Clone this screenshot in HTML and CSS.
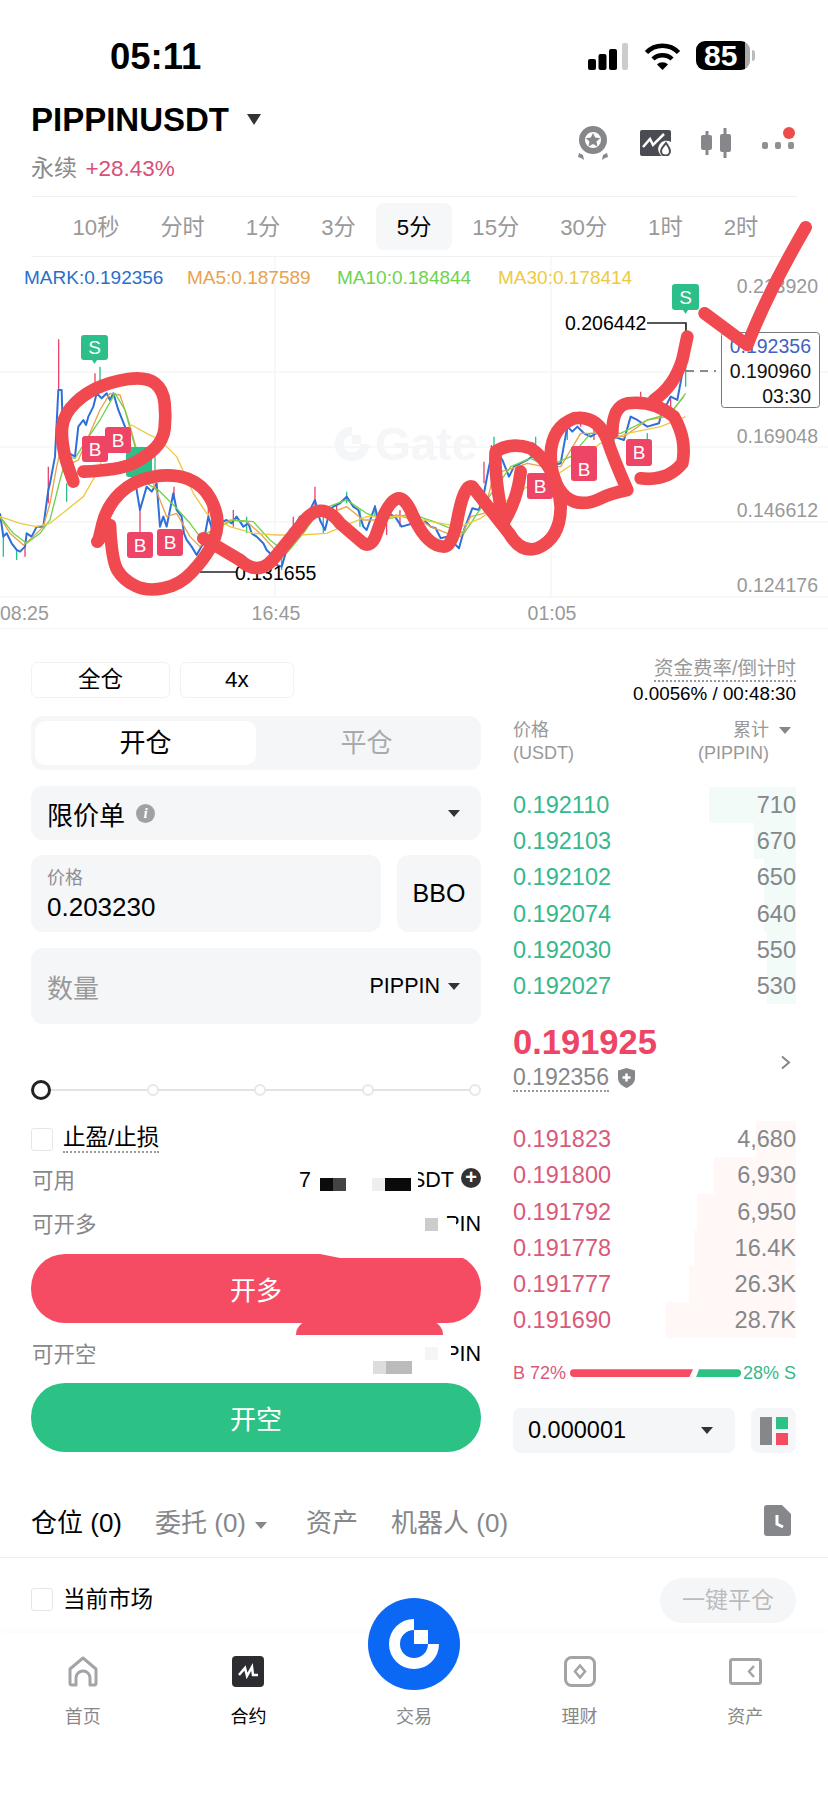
FILE: index.html
```html
<!DOCTYPE html>
<html lang="zh-CN">
<head>
    <meta charset="UTF-8">
    <meta name="viewport" content="width=device-width, initial-scale=1.0">
    <title>PIPPINUSDT</title>
    <link rel="stylesheet" href="styles.css">
</head>
<body>

<div class="status">
    <span class="clock">05:11</span>
    <div class="status-icons">
        <svg width="40" height="28" viewBox="0 0 40 28">
            <rect x="0" y="17" width="8" height="11" rx="2" fill="#000"/>
            <rect x="10.5" y="12" width="8" height="16" rx="2" fill="#000"/>
            <rect x="21" y="7" width="8" height="21" rx="2" fill="#000"/>
            <rect x="34" y="1" width="6" height="27" rx="2" fill="#ccc"/>
        </svg>
        <svg width="37" height="28" viewBox="0 0 37 28">
            <path d="M2.5 10.5C11 1.500 26 1.500 34.5 10.5" fill="none" stroke="#000" stroke-width="4.5"/>
            <path d="M9 17C14 12 23 12 28 17" fill="none" stroke="#000" stroke-width="4.5"/>
            <path d="M13 22.5C16 19.5 21 19.5 24 22.5L18.5 28Z" fill="#000"/>
        </svg>
        <div class="battery">85</div>
    </div>
</div>

<div class="head">
    <div>
        <div class="pair">PIPPINUSDT <i class="tri tri-big"></i></div>
        <div class="pair-sub">永续 <span class="pink">+28.43%</span></div>
    </div>
    <div class="head-icons">
        <svg width="34" height="34" viewBox="0 0 34 34">
            <circle cx="17" cy="14" r="11" fill="none" stroke="#85878b" stroke-width="6"/>
            <path d="M17 7l2.2 4.6 5 .6-3.700 3.400 1 5-4.500-2.500-4.500 2.500 1-5-3.700-3.400 5-.6z" fill="#85878b"/>
            <path d="M3 27l4 2 1 5-3-2-3-1zM31 27l-4 2-1 5 3-2 3-1z" fill="#85878b"/>
        </svg>
        <svg width="31" height="26" viewBox="0 0 31 26">
            <path d="M2 0H29a2 2 0 0 1 2 2V12a7 7 0 0 0-9 14H2a2 2 0 0 1-2-2V2a2 2 0 0 1 2-2Z" fill="#4a4c52"/>
            <path d="M3 17L10 9L13 15L24 4" fill="none" stroke="#fff" stroke-width="2.5"/>
            <path d="M26 13c2 3 4 5 4 8a4.500 4.500 0 0 1-9 0c0-3 3-5 5-8Z" fill="none" stroke="#4a4c52" stroke-width="2"/>
        </svg>
        <svg width="30" height="30" viewBox="0 0 30 30">
            <path d="M6 3V27M24 0V30" stroke="#85878b" stroke-width="3"/>
            <rect x="0" y="7" width="11" height="15" rx="2" fill="#85878b"/>
            <rect x="19" y="6" width="11" height="18" rx="2" fill="#85878b"/>
        </svg>
        <div class="dots"><i></i><i></i><i></i><b></b></div>
    </div>
</div>

<div class="tabs">
    <span class="tab">10秒</span>
    <span class="tab">分时</span>
    <span class="tab">1分</span>
    <span class="tab">3分</span>
    <span class="tab tab-on">5分</span>
    <span class="tab">15分</span>
    <span class="tab">30分</span>
    <span class="tab">1时</span>
    <span class="tab">2时</span>
</div>

<div class="chart">
    <svg class="chart-svg" width="828" height="371" viewBox="0 257 828 371">
        <!-- grid -->
        <path d="M0 372H828M0 447H828M0 522H828M0 597H828M275 257V597M551 257V597" stroke="#f6f6f7" stroke-width="1.5"/>

        <!-- watermark -->
        <path d="M352 431A13 13 0 1 0 365 444" fill="none" stroke="#f5f6f8" stroke-width="9"/>
        <rect x="352" y="435" width="9" height="9" fill="#f5f6f8"/>
        <text class="mark-text" x="375" y="460">Gate</text>

        <!-- legend -->
        <text class="legend" x="24" y="284" fill="#2a6fc9">MARK:0.192356</text>
        <text class="legend" x="187" y="284" fill="#e9a24c">MA5:0.187589</text>
        <text class="legend" x="337" y="284" fill="#6fd24c">MA10:0.184844</text>
        <text class="legend" x="498" y="284" fill="#edc944">MA30:0.178414</text>

        <!-- axis -->
        <text class="axis" x="818" y="293" text-anchor="end">0.213920</text>
        <text class="axis" x="818" y="443" text-anchor="end">0.169048</text>
        <text class="axis" x="818" y="517" text-anchor="end">0.146612</text>
        <text class="axis" x="818" y="592" text-anchor="end">0.124176</text>
        <text class="axis" x="0" y="620">08:25</text>
        <text class="axis" x="276" y="620" text-anchor="middle">16:45</text>
        <text class="axis" x="552" y="620" text-anchor="middle">01:05</text>

        <!-- left half, drawn at 3x -->
        <g transform="translate(0 250) scale(.3333)" fill="none" stroke-linejoin="round">
            <path d="M176 268V420M145 650V760M285 370V430M420 780V850M522 710V750M945 710V780M75 890V920M625 750V800M1160 820V855M700 780V830M880 800V850M1010 760V810M1200 780V830" stroke="#e8476a" stroke-width="4"/>
            <path d="M10 850V920M50 900V930M200 700V755M300 350V420M465 610V700M1040 725V760M1125 765V800M740 800V850M970 800V850M1080 780V830M845 920V960" stroke="#2dbf8a" stroke-width="4"/>
            <path d="M0 790L10 860L20 850L35 880L50 900L60 905L75 890L80 850L95 860L110 830L130 830L145 720L150 700L165 620L175 420L185 420L190 600L225 620L235 530L250 510L258 525L265 500L280 470L290 430L305 445L320 430L330 450L340 430L355 480L375 530L410 720L420 780L440 710L455 725L470 700L480 830L490 800L500 830L520 730L530 780L545 800L552 850L560 870L575 890L590 915L610 880L625 800L640 850L655 820L680 810L695 820L710 800L730 830L745 820L755 850L770 860L790 880L800 900L820 920L830 945L845 950L860 900L870 840L885 825L900 800L925 790L945 750L960 810L975 840L990 780L1000 770L1020 760L1040 740L1060 770L1075 780L1090 830L1100 840L1125 770L1135 810L1150 820L1165 790L1185 800L1205 830L1240 820" stroke="#2f6fd8" stroke-width="6"/>
            <path d="M0 800L30 850L70 885L100 860L130 830L150 760L170 650L190 560L215 640L235 630L265 560L300 480L330 430L360 435L385 510L410 600L430 650L460 700L500 800L530 790L570 860L600 890L640 840L690 810L740 815L780 850L830 905L870 880L910 810L950 770L990 790L1040 770L1090 810L1140 810L1190 795L1240 810" stroke="#e9a24c" stroke-width="4"/>
            <path d="M0 800L40 850L80 880L120 850L150 810L180 690L200 620L225 625L260 570L300 510L345 430L375 480L405 590L440 700L475 720L530 775L570 820L600 860L640 840L700 810L760 815L810 870L860 910L910 850L960 780L1040 750L1100 790L1150 810L1240 790" stroke="#6fd24c" stroke-width="4"/>
            <path d="M0 800L60 820L110 830L150 820L200 780L250 740L290 670L330 570L395 525L440 550L480 570L530 620L580 730L620 790L690 830L760 850L830 855L900 855L980 850L1040 825L1100 800L1190 800L1240 800" stroke="#edc944" stroke-width="4"/>
        </g>

        <!-- right half, drawn at 3x -->
        <g transform="translate(414 200) scale(.3333)" fill="none" stroke-linejoin="round">
            <path d="M210 785V850M232 735V800M500 635V680M680 575V610M540 680V720M770 590V640" stroke="#e8476a" stroke-width="4"/>
            <path d="M240 710V780M365 710V770M700 700V730M815 370V560M460 670V720M600 700V730" stroke="#2dbf8a" stroke-width="4"/>
            <path d="M30 960L50 980L65 985L80 1015L100 1010L135 1045L150 990L175 925L195 930L210 880L225 800L240 740L265 780L285 830L300 800L340 780L360 765L385 790L405 800L440 790L460 680L475 695L490 680L510 700L530 710L555 695L630 720L650 650L670 660L700 680L735 670L745 630L760 610L770 590L790 600L805 520L815 500" stroke="#2f6fd8" stroke-width="6"/>
            <path d="M0 950L50 980L100 1000L140 1010L170 950L210 940L240 820L280 810L340 790L390 800L440 800L500 700L560 700L630 710L700 660L760 650L810 590" stroke="#e9a24c" stroke-width="4"/>
            <path d="M0 945L60 965L110 985L150 1000L190 940L240 870L290 800L350 775L400 800L470 770L530 700L620 700L700 660L770 640L815 580" stroke="#6fd24c" stroke-width="4"/>
            <path d="M0 955L80 970L140 980L200 955L280 900L340 860L420 830L480 790L560 730L640 700L740 680L815 650" stroke="#edc944" stroke-width="4"/>
        </g>

        <!-- high / low -->
        <path d="M647 323H686V340" fill="none" stroke="#222" stroke-width="1.5"/>
        <text class="price-tag" x="565" y="330">0.206442</text>
        <path d="M200 572H236" stroke="#222" stroke-width="1.5"/>
        <text class="price-tag" x="235" y="580">0.131655</text>

        <!-- trade markers -->
        <g class="sell">
            <path d="M84 335H105a3 3 0 0 1 3 3V357a3 3 0 0 1-3 3H97L94.5 364L92 360H84a3 3 0 0 1-3-3V338a3 3 0 0 1 3-3Z"/>
            <text x="94.5" y="354">S</text>
            <path d="M675 284H696a3 3 0 0 1 3 3V307a3 3 0 0 1-3 3H688L685.5 314L683 310H675a3 3 0 0 1-3-3V287a3 3 0 0 1 3-3Z"/>
            <text x="685.5" y="304">S</text>
            <rect x="126" y="447" width="26" height="30" rx="3"/>
        </g>
        <g class="buy">
            <rect x="82" y="436" width="26" height="26" rx="3"/><text x="95" y="456">B</text>
            <rect x="105" y="427" width="26" height="26" rx="3"/><text x="118" y="447">B</text>
            <rect x="127" y="532" width="26" height="26" rx="3"/><text x="140" y="552">B</text>
            <rect x="157" y="529" width="26" height="27" rx="3"/><text x="170" y="549">B</text>
            <rect x="527" y="473" width="26" height="26" rx="3"/><text x="540" y="493">B</text>
            <rect x="571" y="446" width="26" height="26" rx="3"/>
            <rect x="571" y="455" width="26" height="26" rx="3"/><text x="584" y="476">B</text>
            <rect x="626" y="439" width="26" height="27" rx="3"/><text x="639" y="459">B</text>
        </g>

        <!-- countdown box -->
        <path d="M686 371H716" stroke="#666" stroke-width="1.5" stroke-dasharray="8 6"/>
        <rect x="721.5" y="332.5" width="98" height="75" rx="3" fill="#fff" stroke="#777"/>
        <text class="axis axis-blue" x="811" y="353" text-anchor="end">0.192356</text>
        <text class="axis axis-dark" x="811" y="378" text-anchor="end">0.190960</text>
        <text class="axis axis-dark" x="811" y="403" text-anchor="end">03:30</text>

        <!-- hand drawn marks on the left half -->
        <g transform="translate(0 250) scale(.3333)" class="scrawl">
            <path d="M220 695L205 652Q190 610 186 560Q182 510 211 475Q240 440 285 417Q330 395 385 387Q440 380 465 400Q490 420 494 460Q498 500 494 535Q490 570 465 595Q440 620 400 640Q360 660 250 665"/>
            <path d="M296 870L308 820Q320 770 360 730Q400 690 460 680Q520 670 565 687Q610 705 632 747Q655 790 652 825Q650 860 630 895Q610 930 575 967Q540 1005 490 1015Q440 1025 405 1007Q370 990 352 960Q335 930 330 825L292 875"/>
            <path d="M610 865L720 930Q780 985 830 915L900 830Q960 740 1020 820L1090 880Q1115 895 1130 850Q1190 670 1240 800"/>
        </g>
        <!-- and on the right half -->
        <g transform="translate(414 200) scale(.3333)" class="scrawl">
            <path d="M-2 950Q40 1040 90 1040Q115 1040 130 960Q150 850 175 860L285 1000Q320 1060 370 1045Q440 1015 440 920Q430 800 350 745Q290 725 245 755Q240 820 265 950"/>
            <path d="M320 815Q310 900 270 965"/>
            <path d="M640 870Q590 880 560 895Q500 925 455 890Q410 850 410 760Q415 680 480 655Q550 645 580 720Q600 780 640 870"/>
            <path d="M680 835Q760 845 805 790Q820 720 780 650Q720 600 640 610Q595 620 595 700"/>
            <path d="M720 600Q780 560 805 480L820 410"/>
            <path d="M872 340L1000 435Q1060 280 1175 82"/>
        </g>
    </svg>
</div>

<div class="trade">
    <div class="form">
        <div class="lev">
            <span class="lev-btn lev-mode">全仓</span>
            <span class="lev-btn lev-x">4x</span>
        </div>
        <div class="seg">
            <span class="seg-item seg-on">开仓</span>
            <span class="seg-item">平仓</span>
        </div>
        <div class="field order-type">
            <span>限价单</span>
            <i class="info">i</i>
            <i class="tri push"></i>
        </div>
        <div class="price-row">
            <div class="field price-box">
                <span class="price-label">价格</span>
                <span class="price-val">0.203230</span>
            </div>
            <div class="field bbo">BBO</div>
        </div>
        <div class="field qty">
            <span class="qty-label">数量</span>
            <span class="qty-unit push">PIPPIN</span>
            <i class="tri"></i>
        </div>

        <div class="slider">
            <i class="knob"></i><i class="stop"></i><i class="stop"></i><i class="stop"></i><i class="stop"></i>
        </div>

        <div class="tpsl">
            <i class="check"></i>
            <span class="dotted">止盈/止损</span>
        </div>

        <div class="info-row info-first">
            <span>可用</span>
            <span class="masked">
                <span class="num">7</span>
                <i class="px px-a"></i><i class="px px-b"></i>
                <i class="px px-c"></i>
                <span class="tail tail-sdt">SDT</span>
                <i class="px px-wipe-s"></i>
                <i class="px px-d"></i>
                <i class="plus">+</i>
            </span>
        </div>
        <div class="info-row info-second">
            <span>可开多</span>
            <span class="masked">
                <i class="px px-grey"></i>
                <span class="tail">PIN</span>
                <i class="px px-wipe-p"></i>
            </span>
        </div>
        <div class="buy-wrap">
            <button class="big-btn btn-long">开多</button>
            <i class="btn-notch"></i>
            <i class="btn-dome"></i>
        </div>
        <div class="info-row info-third">
            <span>可开空</span>
            <span class="masked">
                <i class="px px-pale"></i>
                <span class="tail">PIN</span>
                <i class="px px-wipe-p2"></i>
                <i class="px px-e"></i><i class="px px-f"></i>
            </span>
        </div>
        <button class="big-btn btn-short">开空</button>
    </div>

    <div class="book">
        <div class="funding">
            <div><span class="dotted">资金费率/倒计时</span></div>
            <div class="funding-val">0.0056% / 00:48:30</div>
        </div>
        <div class="book-head">
            <div>价格<br>(USDT)</div>
            <div class="book-head-r"><span class="sum">累计 <i class="tri tri-grey"></i></span><br><span class="sum-unit">(PIPPIN)</span></div>
        </div>

        <div class="rows rows-sell">
            <div class="row"><i class="depth" style="width:87px"></i><span>0.192110</span><span class="qty-cell">710</span></div>
            <div class="row"><i class="depth" style="width:42px"></i><span>0.192103</span><span class="qty-cell">670</span></div>
            <div class="row"><i class="depth" style="width:32px"></i><span>0.192102</span><span class="qty-cell">650</span></div>
            <div class="row"><i class="depth" style="width:32px"></i><span>0.192074</span><span class="qty-cell">640</span></div>
            <div class="row"><i class="depth" style="width:29px"></i><span>0.192030</span><span class="qty-cell">550</span></div>
            <div class="row"><i class="depth" style="width:29px"></i><span>0.192027</span><span class="qty-cell">530</span></div>
        </div>

        <div class="last">
            <div class="last-price">0.191925</div>
            <div class="last-mark">
                <span class="dotted">0.192356</span>
                <svg width="17" height="20" viewBox="0 0 17 20">
                    <path d="M8.5 0L17 2.5V10C17 15 13 18 8.5 20C4 18 0 15 0 10V2.5Z" fill="#85878b"/>
                    <path d="M8.5 5.5V13.5M4.5 9.5H12.5" stroke="#fff" stroke-width="2.5"/>
                </svg>
                <svg class="chev" width="11" height="15" viewBox="0 0 11 15">
                    <path d="M2 1.5L9 7.5L2 13.5" fill="none" stroke="#85878b" stroke-width="2"/>
                </svg>
            </div>
        </div>

        <div class="rows rows-buy">
            <div class="row"><i class="depth" style="width:40px"></i><span>0.191823</span><span class="qty-cell">4,680</span></div>
            <div class="row"><i class="depth" style="width:82px"></i><span>0.191800</span><span class="qty-cell">6,930</span></div>
            <div class="row"><i class="depth" style="width:99px"></i><span>0.191792</span><span class="qty-cell">6,950</span></div>
            <div class="row"><i class="depth" style="width:102px"></i><span>0.191778</span><span class="qty-cell">16.4K</span></div>
            <div class="row"><i class="depth" style="width:107px"></i><span>0.191777</span><span class="qty-cell">26.3K</span></div>
            <div class="row"><i class="depth" style="width:130px"></i><span>0.191690</span><span class="qty-cell">28.7K</span></div>
        </div>

        <div class="ratio">
            <span class="ratio-b">B 72%</span>
            <i class="ratio-red"></i>
            <i class="ratio-green"></i>
            <span class="ratio-s">28% S</span>
        </div>

        <div class="book-foot">
            <div class="step">
                <span>0.000001</span>
                <i class="tri push"></i>
            </div>
            <div class="layout-btn">
                <svg width="28" height="28" viewBox="0 0 28 28">
                    <rect x="0" y="0" width="12" height="28" fill="#85878b"/>
                    <rect x="16" y="0" width="12" height="12" fill="#2dc285"/>
                    <rect x="16" y="16" width="12" height="12" fill="#f64c63"/>
                </svg>
            </div>
        </div>
    </div>
</div>

<div class="pos-tabs">
    <span class="pos-on">仓位 (0)</span>
    <span>委托 (0)<i class="tri tri-grey tri-mid"></i></span>
    <span class="pos-assets">资产</span>
    <span>机器人 (0)</span>
    <svg class="doc" width="27" height="31" viewBox="0 0 27 31">
        <path d="M3 0H18L27 9V28a3 3 0 0 1-3 3H3a3 3 0 0 1-3-3V3a3 3 0 0 1 3-3Z" fill="#85878b"/>
        <path d="M13 10V19L19 22" fill="none" stroke="#fff" stroke-width="3"/>
    </svg>
</div>

<div class="filter">
    <i class="check"></i>
    <span class="filter-label">当前市场</span>
    <span class="close-all">一键平仓</span>
</div>

<div class="nav">
    <div class="nav-item">
        <svg width="32" height="31" viewBox="0 0 32 31">
            <path d="M3 27V13L16 2L29 13V27a2 2 0 0 1-2 2H23V22a7 7 0 0 0-14 0V29H5a2 2 0 0 1-2-2Z" fill="none" stroke="#a3a4a7" stroke-width="3" stroke-linejoin="round"/>
        </svg>
        <span>首页</span>
    </div>
    <div class="nav-item nav-on">
        <svg width="32" height="31" viewBox="0 0 32 31">
            <rect width="32" height="31" rx="4" fill="#2c2d30"/>
            <path d="M7 19L13 12L15 20L20 11L21 19H26" fill="none" stroke="#fff" stroke-width="2.5"/>
        </svg>
        <span>合约</span>
    </div>
    <div class="nav-item">
        <svg width="32" height="31" viewBox="0 0 32 31"></svg>
        <span>交易</span>
    </div>
    <div class="nav-item">
        <svg width="32" height="31" viewBox="0 0 32 31">
            <rect x="1.5" y="1.5" width="29" height="28" rx="6" fill="none" stroke="#a3a4a7" stroke-width="3"/>
            <path d="M16 9.5L21 15.5L16 21.5L11 15.5Z" fill="none" stroke="#a3a4a7" stroke-width="2.5"/>
        </svg>
        <span>理财</span>
    </div>
    <div class="nav-item">
        <svg width="33" height="31" viewBox="0 0 33 31">
            <rect x="1.5" y="3.5" width="30" height="24" rx="2" fill="none" stroke="#a3a4a7" stroke-width="3"/>
            <path d="M25 10L20 15.5L25 21" fill="none" stroke="#a3a4a7" stroke-width="2.5"/>
        </svg>
        <span>资产</span>
    </div>
    <div class="fab">
        <svg width="60" height="60" viewBox="0 0 60 60">
            <path d="M30 10.5A19.5 19.5 0 1 0 49.5 30" fill="none" stroke="#fff" stroke-width="11"/>
            <rect x="30" y="16" width="14" height="14" fill="#fff"/>
        </svg>
    </div>
</div>

</body>
</html>
```

FILE: styles.css
```css
* {
    box-sizing: border-box;
}

html, body {
    margin: 0;
    padding: 0;
}

body {
    width: 828px;
    height: 1795px;
    overflow: hidden;
    background: #fff;
    color: #000;
    font-family: "Liberation Sans", "Noto Sans CJK SC", sans-serif;
}

i {
    font-style: normal;
}

.push {
    margin-left: auto;
}

.pink {
    color: #d6507a;
    margin-left: 2px;
    font-size: 22.5px;
}

.dotted {
    border-bottom: 2px dotted #9a9a9a;
}

/* triangles used by all the dropdowns */
.tri {
    display: inline-block;
    width: 0;
    height: 0;
    border-left: 6px solid transparent;
    border-right: 6px solid transparent;
    border-top: 7px solid #333;
}

.tri-big {
    border-left-width: 7px;
    border-right-width: 7px;
    border-top-width: 11px;
    margin-left: 9px;
    vertical-align: 6px;
}

.tri-grey {
    border-top-color: #85878b;
}

.tri-mid {
    margin-left: 9px;
    vertical-align: 3px;
}

/* status bar */
.status {
    height: 90px;
    padding: 40px 78px 0 110px;
    display: flex;
    justify-content: space-between;
    align-items: flex-start;
}

.clock {
    font-size: 36.5px;
    line-height: 34px;
    font-weight: 700;
}

.status-icons {
    display: flex;
    align-items: center;
    margin-top: 1px;
    gap: 16px;
}

.battery {
    position: relative;
    width: 54px;
    height: 29px;
    margin-left: -1px;
    border-radius: 9px;
    background: linear-gradient(to right, #000 49px, #a9a9a9 49px);
    color: #fff;
    font-size: 30px;
    font-weight: 700;
    line-height: 29px;
    padding-left: 8px;
}

.battery::after {
    content: "";
    position: absolute;
    left: 56px;
    top: 9px;
    width: 3px;
    height: 11px;
    border-radius: 0 3px 3px 0;
    background: #bbb;
}

/* header */
.head {
    margin: 0 31px;
    height: 107px;
    border-bottom: 1px solid #f0f0f0;
    display: flex;
    justify-content: space-between;
}

.pair {
    margin-top: 10px;
    font-size: 33px;
    line-height: 40px;
    font-weight: 700;
}

.pair-sub {
    margin-top: 13px;
    font-size: 23px;
    line-height: 30px;
    color: #8a8a8a;
}

.head-icons {
    display: flex;
    align-items: center;
    gap: 30px;
    height: 38px;
    margin-top: 34px;
    margin-right: 3px;
}

.dots {
    position: relative;
    width: 32px;
    height: 6px;
    display: flex;
    justify-content: space-between;
    margin-top: 4px;
    margin-left: 1px;
}

.dots i {
    width: 6px;
    height: 7px;
    border-radius: 2px;
    background: #8f9094;
}

.dots b {
    position: absolute;
    right: -1px;
    top: -15px;
    width: 12px;
    height: 12px;
    border-radius: 50%;
    background: #ee4b4b;
}

/* time frames */
.tabs {
    height: 60px;
    margin: 0 31px;
    padding: 6px 0 0 21px;
    border-bottom: 1px solid #f0f0f0;
    display: flex;
    align-items: flex-start;
}

.tab {
    height: 47px;
    line-height: 49px;
    padding: 0 20.5px;
    font-size: 22.2px;
    color: #999;
    white-space: nowrap;
}

.tab-on {
    background: #f5f7f8;
    border-radius: 8px;
    color: #000;
}

/* chart */
.chart {
    height: 372px;
    border-bottom: 1px solid #f3f3f3;
}

.chart-svg {
    display: block;
    overflow: visible;
}

.legend {
    font-size: 19px;
}

.axis {
    font-size: 19.5px;
    fill: #999;
}

.axis-dark {
    fill: #111;
}

.axis-blue {
    fill: #3f63c4;
}

.price-tag {
    font-size: 19.5px;
    fill: #000;
}

.mark-text {
    font-size: 46px;
    font-weight: 700;
    fill: #f5f6f8;
}

.sell path, .sell rect {
    fill: #2dbf8a;
}

.buy rect {
    fill: #ee4466;
}

.sell text, .buy text {
    fill: #fff;
    font-size: 19px;
    text-anchor: middle;
}

.scrawl path {
    fill: none;
    stroke: #f04a50;
    stroke-width: 38;
    stroke-linecap: round;
    stroke-linejoin: round;
}

/* trade area */
.trade {
    display: grid;
    grid-template-columns: 450px 283px;
    column-gap: 32px;
    padding: 0 32px 0 31px;
}

.form {
    padding-top: 33px;
}

.lev {
    display: flex;
    gap: 10px;
}

.lev-btn {
    height: 36px;
    line-height: 34px;
    text-align: center;
    border: 1px solid #f2f2f3;
    border-radius: 6px;
    font-size: 22.5px;
}

.lev-mode {
    width: 139px;
}

.lev-x {
    width: 114px;
}

.seg {
    margin-top: 18px;
    height: 54px;
    padding: 5px 4px;
    border-radius: 12px;
    background: #f5f6f8;
    display: flex;
}

.seg-item {
    width: 221px;
    line-height: 44px;
    text-align: center;
    font-size: 26px;
    color: #a9aaac;
}

.seg-on {
    background: #fff;
    border-radius: 10px;
    color: #000;
}

.field {
    background: #f5f6f8;
    border-radius: 12px;
}

.order-type {
    margin-top: 16px;
    height: 54px;
    padding: 0 21px 0 16px;
    display: flex;
    align-items: center;
    font-size: 26px;
}

.info {
    width: 19px;
    height: 19px;
    margin-left: 11px;
    border-radius: 50%;
    background: #a0a1a4;
    color: #fff;
    font-family: "Liberation Serif", serif;
    font-size: 15px;
    font-weight: 700;
    font-style: italic;
    line-height: 19px;
    text-align: center;
}

.price-row {
    margin-top: 15px;
    display: flex;
    gap: 16px;
}

.price-box {
    width: 350px;
    height: 77px;
    padding: 11px 16px 0;
}

.price-label {
    display: block;
    font-size: 18px;
    line-height: 24px;
    color: #8f9094;
}

.price-val {
    display: block;
    margin-top: 2px;
    font-size: 26px;
    line-height: 30px;
}

.bbo {
    width: 84px;
    height: 77px;
    line-height: 77px;
    text-align: center;
    font-size: 25px;
}

.qty {
    margin-top: 16px;
    height: 76px;
    padding: 0 21px 0 16px;
    display: flex;
    align-items: center;
}

.qty-label {
    font-size: 26px;
    color: #999;
}

.qty-unit {
    font-size: 21.5px;
    margin-right: 8px;
}

.slider {
    position: relative;
    margin-top: 57px;
    height: 18px;
    display: flex;
    justify-content: space-between;
    align-items: center;
}

.slider::before {
    content: "";
    position: absolute;
    left: 5px;
    right: 5px;
    top: 8px;
    height: 2px;
    background: #e2e3e5;
}

.knob {
    position: relative;
    width: 20px;
    height: 20px;
    border: 3px solid #222;
    border-radius: 50%;
    background: #fff;
}

.stop {
    position: relative;
    width: 12px;
    height: 12px;
    border: 2px solid #e6e7e9;
    border-radius: 50%;
    background: #fff;
}

.check {
    display: block;
    width: 22px;
    height: 23px;
    border: 1.5px solid #e6e6e8;
    border-radius: 3px;
    background: #fff;
}

.tpsl {
    margin-top: 26px;
    display: flex;
    align-items: center;
    gap: 10px;
    font-size: 22.5px;
    line-height: 24px;
}

.tpsl .dotted {
    line-height: 26px;
}

.info-row {
    display: flex;
    justify-content: space-between;
    align-items: center;
    height: 24px;
    font-size: 21.5px;
    color: #888;
    padding-left: 1px;
}

.info-first {
    margin-top: 13px;
}

.info-second {
    margin-top: 20px;
}

.info-third {
    margin-top: 17px;
}

.masked {
    position: relative;
    display: block;
    height: 24px;
}

.num {
    position: absolute;
    right: 170px;
    top: 2px;
    color: #000;
    line-height: 24px;
}

/* mosaic patches hiding the balances */
.px {
    position: absolute;
    display: block;
    width: 13px;
    height: 13px;
}

.px-a { right: 148px; top: 12px; background: #0c0c0c; }
.px-b { right: 135px; top: 12px; background: #444; }
.px-c { right: 96px; top: 12px; background: #eee; }
.px-d { right: 70px; top: 12px; width: 26px; background: #0a0a0a; }
.px-grey { right: 43px; top: 8px; background: #ccc; }
.px-pale { right: 43px; top: 7px; background: #f5f5f6; }
.px-e { right: 95px; top: 21px; background: #ddd; }
.px-f { right: 69px; top: 21px; width: 26px; background: #bbb; }
.px-wipe-s { right: 63px; top: 0; width: 7px; height: 26px; background: #fff; }
.px-wipe-p { right: 25px; top: 8px; width: 11px; height: 19px; background: #fff; }
.px-wipe-p2 { right: 30px; top: 0; width: 6px; height: 26px; background: #fff; }

.tail {
    position: absolute;
    right: 0;
    top: 2px;
    color: #000;
    line-height: 24px;
}

.tail-sdt {
    right: 27px;
}

.plus {
    position: absolute;
    right: 0;
    top: 2px;
    width: 20px;
    height: 20px;
    border-radius: 50%;
    background: #333;
    color: #fff;
    font-size: 20px;
    font-weight: 700;
    line-height: 19px;
    text-align: center;
}

.big-btn {
    display: block;
    width: 450px;
    height: 69px;
    padding: 0;
    border: none;
    border-radius: 34px;
    color: #fff;
    font-family: inherit;
    font-size: 26px;
}

.btn-long {
    background: #f64c63;
}

.btn-short {
    margin-top: 19px;
    background: #2dc285;
}

.buy-wrap {
    position: relative;
    margin-top: 20px;
}

.btn-notch {
    position: absolute;
    left: 289px;
    top: 0;
    width: 145px;
    height: 4px;
    background: #fff;
    clip-path: polygon(0 0, 100% 0, 100% 100%, 20px 100%);
}

.btn-dome {
    position: absolute;
    left: 265px;
    top: 67px;
    width: 147px;
    height: 14px;
    border-radius: 50px 50px 0 0;
    background: #f64c63;
}

/* order book */
.funding {
    margin-top: 27px;
    text-align: right;
}

.funding .dotted {
    font-size: 19.5px;
    line-height: 24px;
    color: #999;
    display: inline-block;
}

.funding-val {
    font-size: 18.8px;
    line-height: 24px;
}

.book-head {
    margin-top: 13px;
    display: flex;
    justify-content: space-between;
    font-size: 18px;
    line-height: 23px;
    color: #999;
}

.book-head-r {
    text-align: right;
    padding-right: 27px;
    position: relative;
}

.sum .tri {
    position: absolute;
    right: 5px;
    top: 8px;
}

.rows {
    margin-top: 22px;
    color: #35b88a;
}

.row {
    position: relative;
    height: 36.2px;
    line-height: 36px;
    font-size: 23.5px;
    display: flex;
    justify-content: space-between;
}

.row span {
    position: relative;
}

.depth {
    position: absolute;
    top: 0;
    bottom: 0;
    right: 0;
    background: #f2fbf7;
}

.qty-cell {
    color: #85878b;
}

.rows-buy {
    margin-top: 29px;
    color: #d95a7a;
}

.rows-buy .depth {
    background: #fff8f6;
}

.last {
    margin-top: 18px;
}

.last-price {
    font-size: 34.5px;
    line-height: 40px;
    font-weight: 700;
    color: #ee4466;
}

.last-mark {
    margin-top: 2px;
    display: flex;
    align-items: center;
    gap: 9px;
    height: 28px;
    font-size: 23px;
    color: #85878b;
}

.last-mark .dotted {
    line-height: 26px;
}

.chev {
    margin-left: auto;
    margin-right: 5px;
    margin-top: -32px;
}

.ratio {
    margin-top: 25px;
    height: 20px;
    display: flex;
    align-items: center;
    font-size: 18px;
}

.ratio-b {
    color: #d95a7a;
    width: 57px;
}

.ratio-s {
    color: #35b88a;
    margin-left: auto;
}

.ratio-red {
    width: 123px;
    height: 8px;
    border-radius: 4px 0 0 4px;
    background: #f64c63;
    clip-path: polygon(0 0, 100% 0, 97% 100%, 0 100%);
}

.ratio-green {
    width: 45px;
    height: 8px;
    margin-left: 3px;
    border-radius: 0 4px 4px 0;
    background: #2dc285;
    clip-path: polygon(3px 0, 100% 0, 100% 100%, 0 100%);
}

.book-foot {
    margin-top: 25px;
    display: flex;
    justify-content: space-between;
}

.step {
    width: 222px;
    height: 45px;
    padding: 0 22px 0 15px;
    border-radius: 8px;
    background: #f5f6f8;
    display: flex;
    align-items: center;
    font-size: 23.5px;
}

.layout-btn {
    width: 45px;
    height: 45px;
    padding: 9px;
    border-radius: 8px;
    background: #f5f6f8;
}

.layout-btn svg {
    display: block;
}

/* positions */
.pos-tabs {
    margin-top: 31px;
    height: 74px;
    padding: 0 37px 0 31px;
    border-bottom: 1px solid #eee;
    display: flex;
    align-items: center;
    gap: 33px;
    font-size: 26px;
    color: #85878b;
}

.pos-on {
    color: #000;
}

.pos-assets {
    margin-left: 6px;
}

.doc {
    margin-left: auto;
}

.filter {
    height: 75px;
    padding: 18px 32px 0 31px;
    display: flex;
    align-items: flex-start;
}

.filter .check {
    margin-top: 12px;
}

.filter-label {
    margin-left: 10px;
    margin-top: 9px;
    font-size: 22.5px;
    line-height: 30px;
}

.close-all {
    margin-left: auto;
    margin-top: 2px;
    width: 136px;
    height: 45px;
    line-height: 45px;
    border-radius: 23px;
    background: #f5f6f8;
    text-align: center;
    font-size: 23px;
    color: #bbb;
}

/* bottom nav */
.nav {
    position: relative;
    height: 162px;
    padding-top: 23px;
    display: flex;
    box-shadow: 0 -2px 6px rgba(0, 0, 0, 0.02);
}

.nav-item {
    flex: 1;
    display: flex;
    flex-direction: column;
    align-items: center;
    font-size: 18px;
    color: #888;
}

.nav-item span {
    margin-top: 17px;
    line-height: 26px;
}

.nav-on {
    color: #000;
}

.fab {
    position: absolute;
    left: 368px;
    top: -35px;
    width: 92px;
    height: 92px;
    padding: 16px;
    border-radius: 50%;
    background: #0a68f4;
}

.fab svg {
    display: block;
}
```
